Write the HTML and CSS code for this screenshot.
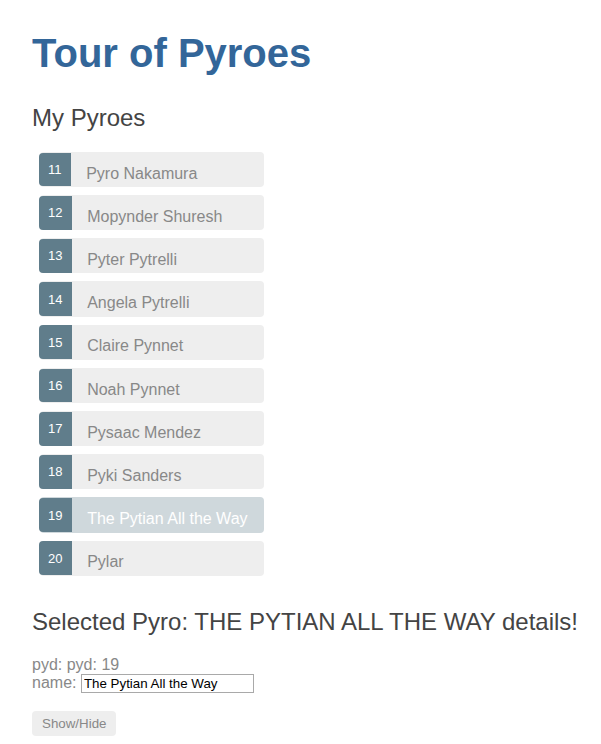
FILE: index.html
```html
<!DOCTYPE html>
<html>
<head>
<meta charset="utf-8">
<link rel="stylesheet" href="styles.css">
</head>
<body>
<div class="app">
  <h1 class="title">Tour of Pyroes</h1>
  <h2 class="subtitle">My Pyroes</h2>
  <ul class="heroes">
    <li><span class="badge">11</span>Pyro Nakamura</li>
    <li><span class="badge">12</span>Mopynder Shuresh</li>
    <li><span class="badge">13</span>Pyter Pytrelli</li>
    <li><span class="badge">14</span>Angela Pytrelli</li>
    <li><span class="badge">15</span>Claire Pynnet</li>
    <li><span class="badge">16</span>Noah Pynnet</li>
    <li><span class="badge">17</span>Pysaac Mendez</li>
    <li><span class="badge">18</span>Pyki Sanders</li>
    <li class="selected"><span class="badge">19</span>The Pytian All the Way</li>
    <li><span class="badge">20</span>Pylar</li>
  </ul>
  <div class="details">
    <h2 class="subtitle nowrap">Selected Pyro: THE PYTIAN ALL THE WAY details!</h2>
    <div><label>pyd: </label>pyd: 19</div>
    <div><label>name: </label><input class="name-input" type="text" value="The Pytian All the Way"></div>
    <button class="toggle">Show/Hide</button>
  </div>
</div>
</body>
</html>
```

FILE: styles.css
```css
html {
  margin: 0;
  padding: 0;
}
body {
  margin: 0 0 2em 2em;
  padding-top: 1px;
  color: #888;
  font-family: "Liberation Sans", Arial, sans-serif;
  font-size: 16px;
}
.title {
  color: #369;
  font-family: "Liberation Sans", Arial, sans-serif;
  font-size: 250%;
  margin: 30px 0 28px 0;
}
.subtitle {
  color: #444;
  font-family: "Liberation Sans", Arial, sans-serif;
  font-weight: lighter;
  font-size: 1.5em;
  margin: 0.83em 0;
}
.nowrap {
  white-space: nowrap;
}
.heroes {
  margin: 0 0 2em 0;
  list-style-type: none;
  padding: 0;
  width: 15em;
}
.heroes li {
  position: relative;
  left: 0;
  background-color: #eee;
  margin: .5em;
  padding: calc(.3em + 1px) 0 .3em 0;
  height: calc(1.6em - 1px);
  border-radius: 4px;
}
.heroes li.selected {
  background-color: #cfd8dc;
  color: white;
}
.heroes .badge {
  display: inline-block;
  font-size: small;
  color: white;
  padding: 0.8em 0.7em 0 0.7em;
  background-color: #607d8b;
  line-height: 1em;
  position: relative;
  left: -1px;
  top: -5px;
  height: 1.8em;
  margin-right: 14.5px;
  border-radius: 4px 0 0 4px;
}
.name-input {
  font-family: "Liberation Sans", Arial, sans-serif;
  font-size: 13.33px;
  color: #000;
  width: 167px;
  border: 1px solid #a9a9a9;
  padding: 1px 2px;
}
.toggle {
  font-family: "Liberation Sans", Arial, sans-serif;
  font-size: 13.33px;
  color: #888;
  background-color: #eee;
  border: none;
  padding: 5px 10px;
  border-radius: 4px;
  margin-top: 18px;
}
```
